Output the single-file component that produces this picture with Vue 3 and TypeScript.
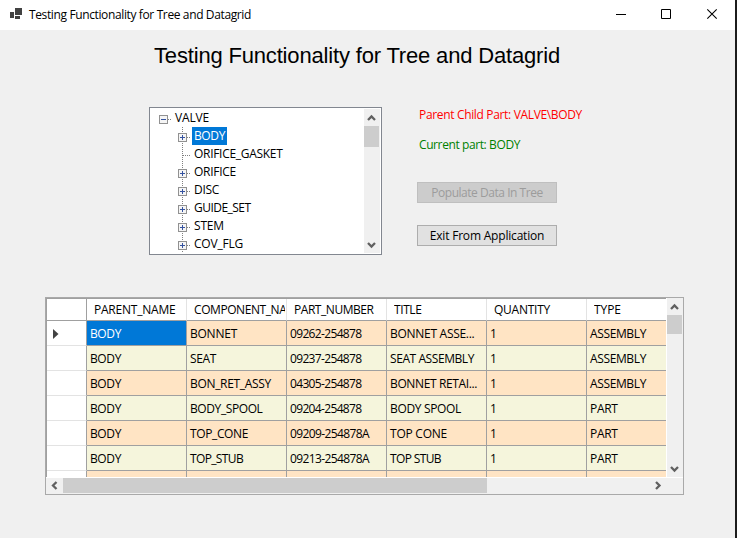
<script setup lang="ts">
interface Label {
  text: string
  width: number
}
interface TreeNode extends Label {
  level: number
  expander: 'plus' | 'minus' | 'none'
  selected?: boolean
}

// Adjusts tracking so a label occupies its measured width.
const vFit = {
  mounted(el: HTMLElement, binding: { value: number }) {
    const natural = el.getBoundingClientRect().width
    const count = (el.textContent ?? '').length
    if (count > 1) el.style.letterSpacing = `${(binding.value - natural) / count}px`
  },
}

const l = (text: string, width: number): Label => ({ text, width })

const nodes: TreeNode[] = [
  { text: 'VALVE', width: 34, level: 0, expander: 'minus' },
  { text: 'BODY', width: 31, level: 1, expander: 'plus', selected: true },
  { text: 'ORIFICE_GASKET', width: 88.5, level: 1, expander: 'none' },
  { text: 'ORIFICE', width: 42, level: 1, expander: 'plus' },
  { text: 'DISC', width: 25, level: 1, expander: 'plus' },
  { text: 'GUIDE_SET', width: 56.5, level: 1, expander: 'plus' },
  { text: 'STEM', width: 30, level: 1, expander: 'plus' },
  { text: 'COV_FLG', width: 49, level: 1, expander: 'plus' },
]

const columns: Label[] = [
  l('PARENT_NAME', 81.5),
  l('COMPONENT_NAME', 109),
  l('PART_NUMBER', 79.5),
  l('TITLE', 27.5),
  l('QUANTITY', 56),
  l('TYPE', 27),
]

const body = l('BODY', 31)
const one = l('1', 7)
const assembly = l('ASSEMBLY', 56)
const part = l('PART', 27.5)
const blank = l('', 0)

const rows: Label[][] = [
  [body, l('BONNET', 47), l('09262-254878', 71.5), l('BONNET ASSE...', 84.5), one, assembly],
  [body, l('SEAT', 26), l('09237-254878', 71.5), l('SEAT ASSEMBLY', 84), one, assembly],
  [body, l('BON_RET_ASSY', 81), l('04305-254878', 71.5), l('BONNET RETAI...', 87), one, assembly],
  [body, l('BODY_SPOOL', 72.5), l('09204-254878', 71.5), l('BODY SPOOL', 71), one, part],
  [body, l('TOP_CONE', 58), l('09209-254878A', 79), l('TOP CONE', 57), one, part],
  [body, l('TOP_STUB', 53), l('09213-254878A', 79), l('TOP STUB', 51), one, part],
  [blank, blank, blank, blank, blank, blank],
]
</script>

<template>
  <div class="screen">
    <div class="window">
      <header class="titlebar">
        <svg class="app-icon" width="12" height="11" viewBox="0 0 12 11" shape-rendering="crispEdges">
          <path d="M5 0h7v7H5zM0 4h4v6H0zM5 8h5v3H5z" fill="#424242" />
        </svg>
        <span class="caption"><span v-fit="222">Testing Functionality for Tree and Datagrid</span></span>
        <div class="controls">
          <svg width="46" height="30" viewBox="0 0 46 30"><path d="M18 14.5h10" stroke="#000" /></svg>
          <svg width="46" height="30" viewBox="0 0 46 30"><path d="M17.500 9.500h9v9h-9z" fill="none" stroke="#000" /></svg>
          <svg width="46" height="30" viewBox="0 0 46 30"><path d="M17.300 9.300l9.400 9.400M26.700 9.300l-9.400 9.400" stroke="#000" stroke-width="1.100" /></svg>
        </div>
      </header>

      <h1 class="heading"><span v-fit="406">Testing Functionality for Tree and Datagrid</span></h1>

      <section class="top">
        <div class="tree">
          <ul class="nodes">
            <li v-for="n in nodes" :key="n.text" :class="['node', 'level-' + n.level]">
              <svg class="joint" width="14" height="18" viewBox="0 0 14 18" shape-rendering="crispEdges">
                <path v-if="n.level" d="M4.500 0V18" stroke="#808080" stroke-dasharray="1 1" />
                <path d="M5 10.500H13" stroke="#808080" stroke-dasharray="1 1" />
                <template v-if="n.expander !== 'none'">
                  <rect x="0.500" y="6.500" width="8" height="8" fill="#f5f5f5" stroke="#919191" />
                  <path d="M2 10.500h5" stroke="#3553a0" />
                  <path v-if="n.expander === 'plus'" d="M4.500 8v5" stroke="#3553a0" />
                </template>
              </svg>
              <span :class="['node-text', { selected: n.selected }]"><span v-fit="n.width">{{ n.text }}</span></span>
            </li>
          </ul>
          <div class="vscroll">
            <svg width="15" height="17" viewBox="0 0 15 17"><path d="M4 11l3.500-3.500 3.500 3.500" /></svg>
            <div class="thumb tree-thumb"></div>
            <svg class="end" width="15" height="17" viewBox="0 0 15 17"><path d="M4 7l3.500 3.500L11 7" /></svg>
          </div>
        </div>

        <div class="side">
          <p class="parent-part"><span v-fit="163">Parent Child Part: VALVE\BODY</span></p>
          <p class="current-part"><span v-fit="101">Current part: BODY</span></p>
          <button class="btn" disabled><span v-fit="111.5">Populate Data In Tree</span></button>
          <button class="btn"><span v-fit="114.5">Exit From Application</span></button>
        </div>
      </section>

      <section class="grid">
        <div class="grid-main">
          <div class="cells">
            <div class="row head">
              <div class="row-head"></div>
              <div v-for="c in columns" :key="c.text" class="cell">
                <div class="clip"><span v-fit="c.width">{{ c.text }}</span></div>
              </div>
            </div>
            <div v-for="(r, i) in rows" :key="i" class="row data">
              <div class="row-head">
                <svg v-if="i === 0" width="6" height="10" viewBox="0 0 6 10"><path d="M0 0l5.500 5L0 10z" fill="#424242" /></svg>
              </div>
              <div v-for="(c, j) in r" :key="j" :class="['cell', { selected: i === 0 && j === 0 }]">
                <span v-fit="c.width">{{ c.text }}</span>
              </div>
            </div>
          </div>
          <div class="vscroll">
            <svg width="15" height="17" viewBox="0 0 15 17"><path d="M4 11l3.500-3.500 3.500 3.500" /></svg>
            <div class="thumb grid-thumb"></div>
            <svg class="end" width="15" height="17" viewBox="0 0 15 17"><path d="M4 7l3.500 3.500L11 7" /></svg>
          </div>
        </div>
        <div class="hscroll">
          <svg width="17" height="15" viewBox="0 0 17 15"><path d="M10.500 4L7 7.500l3.500 3.500" /></svg>
          <div class="thumb wide-thumb"></div>
          <svg class="right" width="17" height="15" viewBox="0 0 17 15"><path d="M7 4l3.500 3.500L7 11" /></svg>
        </div>
      </section>
    </div>
  </div>
</template>

<style>
body {
  margin: 0;
  overflow: hidden;
}
</style>

<style scoped>
* {
  box-sizing: border-box;
}
.screen {
  width: 737px;
  height: 538px;
  padding-right: 2px;
  background: #1c1c1c;
  font-family: 'Open Sans', 'Noto Sans', sans-serif;
  font-size: 12px;
  line-height: 18px;
  color: #000;
  white-space: nowrap;
  overflow: hidden;
}
.window {
  height: 538px;
  background: #f0f0f0;
}
svg {
  display: block;
  flex: none;
}
.titlebar {
  display: flex;
  height: 30px;
  padding-left: 10px;
  background: #fff;
}
.app-icon {
  margin-top: 8px;
}
.caption {
  margin: 6px 0 0 7px;
}
.controls {
  display: flex;
  margin: 0 -1px 0 auto;
}
.heading {
  margin: 0;
  padding: 13px 0 0 154px;
  height: 77px;
  font: 400 22px/25px 'Liberation Sans', Arial, sans-serif;
}
.top {
  display: flex;
  height: 190px;
  padding-left: 149px;
}
.tree {
  display: flex;
  justify-content: space-between;
  width: 233px;
  height: 148px;
  padding: 1px 1px 1px 0;
  border: 1px solid #828790;
  background: #fff;
}
.nodes {
  margin: 0;
  padding: 0;
  list-style: none;
}
.node {
  display: flex;
  height: 18px;
  padding-left: 9px;
}
.level-1 {
  padding-left: 28px;
}
.node-text {
  height: 18px;
  padding: 0 2px;
}
.node-text.selected {
  background: #0078d7;
  color: #fff;
}
.vscroll {
  display: flex;
  flex-direction: column;
  width: 16px;
  background: #f0f0f0;
}
.vscroll path,
.hscroll path {
  fill: none;
  stroke: #606060;
  stroke-width: 2.300;
}
.thumb {
  background: #cdcdcd;
}
.tree-thumb {
  width: 15px;
  height: 21px;
}
.end {
  margin-top: auto;
}
.side {
  display: flex;
  flex-direction: column;
  align-items: flex-start;
  padding-left: 35px;
}
.side p {
  margin: 0;
  padding-left: 2px;
}
.parent-part {
  color: #f00;
}
.side .current-part {
  margin: 12px 0 28px;
  color: #008000;
}
.side p:first-child {
  margin-top: -1px;
}
.btn {
  width: 140px;
  height: 21px;
  margin-bottom: 22px;
  padding: 0;
  border: 1px solid #adadad;
  background: #e1e1e1;
  color: #000;
  font: inherit;
  line-height: 19px;
}
.btn:disabled {
  border-color: #bfbfbf;
  background: #ccc;
  color: #9c9c9c;
}
.grid {
  width: 639px;
  height: 198px;
  margin-left: 45px;
  border: 1px solid #a9a9a9;
}
.grid-main {
  display: flex;
  height: 180px;
  border-bottom: 1px solid #fff;
}
.cells {
  width: 620px;
  height: 179px;
  border-top: 1px solid #a0a0a0;
  border-left: 1px solid #a0a0a0;
  background: #fff;
  overflow: hidden;
}
.grid .vscroll {
  border-left: 1px solid #fff;
  width: 17px;
}
.row {
  display: flex;
  width: 640px;
  height: 25px;
}
.row-head {
  display: flex;
  align-items: center;
  flex: none;
  width: 40px;
  padding-left: 6px;
  border-right: 1px solid #a0a0a0;
  border-bottom: 1px solid #e3e3e3;
}
.row-head svg {
  margin-top: 2px;
}
.cell {
  flex: none;
  width: 100px;
  padding: 4px 0 0 3px;
  border-right: 1px solid #a0a0a0;
  border-bottom: 1px solid #a0a0a0;
  overflow: hidden;
}
.head {
  height: 22px;
}
.head .cell {
  padding: 2px 1px 0 7px;
  border-right-color: #e3e3e3;
}
.clip {
  overflow: hidden;
}
.head .row-head {
  border-bottom-color: #a0a0a0;
}
.data .cell {
  background: #ffe4c4;
}
.data:nth-child(odd) .cell {
  background: #f5f5dc;
}
.data .cell.selected {
  background: #0078d7;
  color: #fff;
}
.grid-thumb {
  width: 15px;
  height: 19px;
}
.hscroll {
  display: flex;
  height: 16px;
  background: #f0f0f0;
}
.wide-thumb {
  width: 424px;
  height: 15px;
}
.right {
  margin: 0 17px 0 auto;
}
</style>
